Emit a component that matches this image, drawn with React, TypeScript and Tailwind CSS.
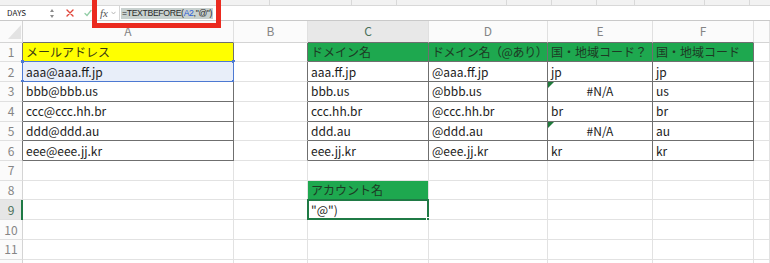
import type { ReactNode } from 'react';

type CellData = {
  text: ReactNode;
  fill?: 'yellow' | 'green' | 'ref';
  center?: boolean;
  error?: boolean;
  tight?: boolean;
};

const COLS = ['', 'A', 'B', 'C', 'D', 'E', 'F', ''];
const ROWS = 12;

const DATA: Record<string, CellData> = {
  A1: { text: 'メールアドレス', fill: 'yellow' },
  A2: { text: 'aaa@aaa.ff.jp', fill: 'ref' },
  A3: { text: 'bbb@bbb.us' },
  A4: { text: 'ccc@ccc.hh.br' },
  A5: { text: 'ddd@ddd.au' },
  A6: { text: 'eee@eee.jj.kr' },
  C1: { text: 'ドメイン名', fill: 'green' },
  D1: { text: 'ドメイン名（@あり）', fill: 'green', tight: true },
  E1: { text: '国・地域コード？', fill: 'green' },
  F1: { text: '国・地域コード', fill: 'green' },
  C2: { text: 'aaa.ff.jp' },
  C3: { text: 'bbb.us' },
  C4: { text: 'ccc.hh.br' },
  C5: { text: 'ddd.au' },
  C6: { text: 'eee.jj.kr' },
  D2: { text: '@aaa.ff.jp' },
  D3: { text: '@bbb.us' },
  D4: { text: '@ccc.hh.br' },
  D5: { text: '@ddd.au' },
  D6: { text: '@eee.jj.kr' },
  E2: { text: 'jp' },
  E3: { text: '#N/A', center: true, error: true },
  E4: { text: 'br' },
  E5: { text: '#N/A', center: true, error: true },
  E6: { text: 'kr' },
  F2: { text: 'jp' },
  F3: { text: 'us' },
  F4: { text: 'br' },
  F5: { text: 'au' },
  F6: { text: 'kr' },
  C8: { text: 'アカウント名', fill: 'green' },
  C9: { text: '"@")' },
};

// cells that carry the dark table borders
function inTable(r: number, c: number) {
  if (r < 1 || r > 6) return false;
  return c === 1 || (c >= 3 && c <= 6);
}

function CornerCell() {
  return (
    <div className="flex items-end justify-end border-r border-b border-r-[#d4d4d4] border-b-[#d4d4d4] bg-[#fbfbfb] pr-[1px] pb-[3px]">
      <svg width="13" height="14" viewBox="0 0 13 14">
        <polygon points="13,0 13,14 0,14" fill="#e3e3e3" />
      </svg>
    </div>
  );
}

function ColHeader({ c }: { c: number }) {
  const active = c === 3;
  const dark = inTable(1, c);
  return (
    <div
      className={`flex items-center justify-center border-r border-b border-r-[#e0e0e0] text-[12px] ${
        dark ? 'border-b-[#6f6f6f]' : 'border-b-[#d4d4d4]'
      } ${active ? 'bg-[#e8e8e8] text-[#4a705a]' : 'bg-[#fbfbfb] text-[#858585]'}`}
    >
      {COLS[c]}
    </div>
  );
}

function RowHeader({ r }: { r: number }) {
  const active = r === 9;
  const dark = inTable(r, 1);
  return (
    <div
      className={`relative flex items-center justify-center border-r border-b border-b-[#e0e0e0] text-[12px] ${
        dark ? 'border-r-[#6f6f6f]' : 'border-r-[#d4d4d4]'
      } ${active ? 'bg-[#e6e6e6] text-[#4a705a]' : 'bg-[#fbfbfb] text-[#858585]'}`}
    >
      {r <= 11 ? r : ''}
      {active && <div className="absolute top-0 right-[-1px] bottom-[-1px] w-[2px] bg-[#1f7a45]" />}
    </div>
  );
}

function Cell({ r, c }: { r: number; c: number }) {
  const key = `${COLS[c]}${r}`;
  const d = COLS[c] ? DATA[key] : undefined;
  const rightDark = inTable(r, c) || inTable(r, c + 1);
  const bottomDark = inTable(r, c) || inTable(r + 1, c);

  let fill = 'bg-white text-[#1c1c1c]';
  if (d?.fill === 'yellow') fill = 'bg-[#ffff00] text-[#3a3a12]';
  if (d?.fill === 'green') fill = 'bg-[#1ea84f] text-[#1d3a24]';
  if (d?.fill === 'ref') fill = 'bg-[#e8eef9] text-[#1c1c1c]';

  return (
    <div
      className={`relative flex items-center overflow-visible whitespace-nowrap border-r border-b px-[3px] text-[12px] ${
        rightDark ? 'border-r-[#6f6f6f]' : 'border-r-[#e2e2e2]'
      } ${bottomDark ? 'border-b-[#6f6f6f]' : 'border-b-[#e2e2e2]'} ${fill} ${
        d?.center ? 'justify-center' : 'justify-start'
      }`}
    >
      {d && <span className={d.tight ? 'tracking-[-0.4px]' : ''}>{d.text}</span>}
      {d?.error && (
        <svg className="absolute top-0 left-0" width="6" height="6" viewBox="0 0 6 6">
          <polygon points="0,0 6,0 0,6" fill="#1f7a3c" />
        </svg>
      )}
      {key === 'A2' && (
        <div className="pointer-events-none absolute top-[-1px] left-[-1px] right-[-1px] bottom-[-1px] border border-[#4d79d2]">
          <div className="absolute top-[-2px] left-[-2px] size-[3px] bg-[#4d79d2]" />
          <div className="absolute top-[-2px] right-[-2px] size-[3px] bg-[#4d79d2]" />
          <div className="absolute bottom-[-2px] left-[-2px] size-[3px] bg-[#4d79d2]" />
          <div className="absolute bottom-[-2px] right-[-2px] size-[3px] bg-[#4d79d2]" />
        </div>
      )}
      {key === 'C9' && (
        <div className="pointer-events-none absolute top-[-1px] left-[-1px] right-[-1px] bottom-[-1px] border-2 border-[#1f7a45]">
          <div className="absolute right-[-3px] bottom-[-3px] size-[4px] border border-white bg-[#1f7a45]" />
        </div>
      )}
    </div>
  );
}

function FormulaBar() {
  return (
    <div className="flex h-[15px] items-center border-b border-[#c9c9c9] bg-white">
      {/* name box */}
      <div className="flex h-full w-[58px] items-center justify-between pr-[4px] pl-[7px] text-[8px] text-[#222]">
        <span>DAYS</span>
        <svg width="4" height="9" viewBox="0 0 4 9">
          <polygon points="2,0 4,3 0,3" fill="#8a8a8a" />
          <polygon points="0,6 4,6 2,9" fill="#8a8a8a" />
        </svg>
      </div>
      <svg className="ml-[8px]" width="8" height="8" viewBox="0 0 8 8">
        <path d="M1 1 L7 7 M7 1 L1 7" stroke="#e0453a" strokeWidth="1.4" strokeLinecap="round" />
      </svg>
      <svg className="ml-[10px]" width="8" height="8" viewBox="0 0 8 8">
        <path d="M1 4.5 L3 6.5 L7 1.5" fill="none" stroke="#92cda6" strokeWidth="1.3" strokeLinecap="round" />
      </svg>
      <span className="ml-[8px] font-['Liberation_Serif',serif] text-[11px] leading-none text-[#555] italic">fx</span>
      <svg className="ml-[3px]" width="5" height="4" viewBox="0 0 5 4">
        <path d="M0.5 0.8 L2.5 3 L4.5 0.8" fill="none" stroke="#b0b0b0" strokeWidth="0.9" />
      </svg>
      <div className="ml-[3px] flex h-full flex-1 items-center border-l border-[#d6d6d6] pl-[1px]">
        <span className="bg-[#c8d1cf] px-[1px] font-['Liberation_Sans',sans-serif] text-[8.7px] leading-[11px] tracking-[-0.35px] text-[#2b2b2b]">
          =TEXTBEFORE(<span className="text-[#2a5bd7]">A2</span>,"@")
        </span>
      </div>
    </div>
  );
}

export default function App() {
  const rows = Array.from({ length: ROWS + 1 }, (_, i) => i);
  const cols = Array.from({ length: COLS.length }, (_, i) => i);

  return (
    <div className="relative h-[263px] w-[770px] overflow-hidden bg-white font-['Noto_Sans_CJK_JP',sans-serif]">
      {/* ribbon bottom edge */}
      <div className="flex h-[6px] border-b border-[#d8d8d8] bg-[#f2f2f2]">
        <div className="w-[270px] border-r border-[#d9d9d9]" />
        <div className="w-[82px] border-r border-[#d9d9d9]" />
        <div className="w-[45px] border-r border-[#d9d9d9]" />
        <div className="w-[110px] border-r border-[#d9d9d9]" />
        <div className="w-[45px] border-r border-[#d9d9d9]" />
        <div className="w-[45px] border-r border-[#d9d9d9]" />
        <div className="w-[38px] border-r border-[#d9d9d9]" />
        <div className="w-[70px] border-r border-[#d9d9d9]" />
        <div className="w-[45px] border-r border-[#d9d9d9]" />
      </div>

      <FormulaBar />

      {/* sheet grid */}
      <div className="grid grid-cols-[23px_211px_74px_121px_119px_105px_101px_1fr] grid-rows-[21.6px_repeat(12,19.74px)]">
        {rows.map((r) =>
          cols.map((c) => {
            if (r === 0 && c === 0) return <CornerCell key="corner" />;
            if (r === 0) return <ColHeader key={`h${c}`} c={c} />;
            if (c === 0) return <RowHeader key={`r${r}`} r={r} />;
            return <Cell key={`${r}-${c}`} r={r} c={c} />;
          }),
        )}
      </div>

      {/* annotation box */}
      <div className="pointer-events-none absolute top-[-6px] left-[92px] h-[34px] w-[129px] border-[5px] border-[#eb2a1f]" />
    </div>
  );
}
